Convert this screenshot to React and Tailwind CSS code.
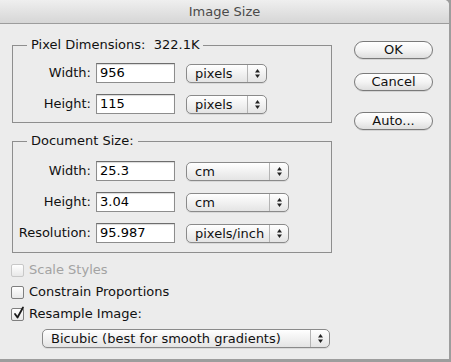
import React from "react";

const FONT = { fontFamily: '"DejaVu Sans", "Lucida Grande", sans-serif' };

const Arrows = () => (
  <svg width="7" height="11" viewBox="0 0 7 11">
    <path d="M3.5 1 L6 4.5 L1 4.5 Z" fill="#222" />
    <path d="M3.5 10 L6 6.5 L1 6.5 Z" fill="#222" />
  </svg>
);

const Popup = ({ value, w }) => (
  <div className={`${w} h-[19px] flex items-stretch rounded-[5px] border border-[#8a8a8a] bg-gradient-to-b from-white to-[#e4e4e4] shadow-[0_1px_0_rgba(0,0,0,0.08)]`}>
    <span className="flex-1 pl-[8px] leading-[17px] text-[#111] truncate">{value}</span>
    <span className="w-[19px] flex items-center justify-center border-l border-[#b4b4b4]">
      <Arrows />
    </span>
  </div>
);

const Field = ({ label, value, unit, unitW }) => (
  <div className="flex items-center h-[20px]">
    <span className="w-[78px] text-right text-[#111]">{label}</span>
    <div className="ml-[5px] w-[79px] h-[20px] bg-white border border-[#8d8d8d] border-t-[#6d6d6d] shadow-[inset_0_1px_1px_rgba(0,0,0,0.15)] pl-[3px] leading-[18px] text-black">
      {value}
    </div>
    <div className="ml-[11px]">
      <Popup value={unit} w={unitW} />
    </div>
  </div>
);

const Group = ({ legend, children, className }) => (
  <fieldset className={`w-[320px] border border-[#8e8e8e] ${className}`}>
    <legend className="ml-[14px] px-[4px] leading-[16px] whitespace-pre text-[#111]">{legend}</legend>
    {children}
  </fieldset>
);

const Check = ({ label, checked, disabled }) => (
  <div className={`flex items-center h-[14px] ${disabled ? "text-[#a3a3a3]" : "text-[#111]"}`}>
    <span
      className={`relative w-[13px] h-[13px] rounded-[2px] border bg-gradient-to-b from-white to-[#e8e8e8] ${
        disabled ? "border-[#c8c8c8]" : "border-[#7f7f7f]"
      }`}
    >
      {checked && (
        <svg className="absolute left-[1px] -top-[3px]" width="12" height="14" viewBox="0 0 12 14">
          <path d="M2 8 L4.5 11.5 L10 1.5" stroke="#1a1a1a" strokeWidth="1.8" fill="none" strokeLinecap="round" strokeLinejoin="round" />
        </svg>
      )}
    </span>
    <span className="ml-[5px]">{label}</span>
  </div>
);

const Button = ({ children, className = "" }) => (
  <div className={`w-[79px] h-[18px] rounded-full border border-[#7a7a7a] bg-gradient-to-b from-white via-[#f4f4f4] to-[#dedede] flex items-center justify-center text-[#111] shadow-[0_1px_0_rgba(0,0,0,0.1)] ${className}`}>
    {children}
  </div>
);

export default function App() {
  return (
    <div className="w-[451px] h-[362px] bg-[#9d9d9d] overflow-hidden text-[13px]" style={FONT}>
      <div className="w-[449px] h-[359px] bg-[#ececec] rounded-tr-[5px] flex flex-col">
        <div className="h-[24px] border-b border-[#9c9c9c] bg-gradient-to-b from-[#efefef] to-[#d6d6d6] rounded-tr-[5px] flex items-center justify-center text-[#4a4a4a]">
          Image Size
        </div>
        <div className="flex px-[12px]">
          <div className="w-[320px] flex flex-col">
            <Group legend="Pixel Dimensions:  322.1K" className="mt-[13px] pt-[10px] pb-[8px]">
              <div className="flex flex-col gap-[11px]">
                <Field label="Width:" value="956" unit="pixels" unitW="w-[81px]" />
                <Field label="Height:" value="115" unit="pixels" unitW="w-[81px]" />
              </div>
            </Group>
            <Group legend="Document Size:" className="mt-[10px] pt-[12px] pb-[9px]">
              <div className="flex flex-col gap-[11px]">
                <Field label="Width:" value="25.3" unit="cm" unitW="w-[103px]" />
                <Field label="Height:" value="3.04" unit="cm" unitW="w-[103px]" />
                <Field label="Resolution:" value="95.987" unit="pixels/inch" unitW="w-[103px]" />
              </div>
            </Group>
            <div className="mt-[10px] -ml-[1px] flex flex-col gap-[8px]">
              <Check label="Scale Styles" disabled />
              <Check label="Constrain Proportions" />
              <Check label="Resample Image:" checked />
            </div>
            <div className="mt-[8px] ml-[30px]">
              <Popup value="Bicubic (best for smooth gradients)" w="w-[288px]" />
            </div>
          </div>
          <div className="ml-[22px] pt-[17px] flex flex-col">
            <Button>OK</Button>
            <Button className="mt-[14px]">Cancel</Button>
            <Button className="mt-[21px]">Auto...</Button>
          </div>
        </div>
      </div>
    </div>
  );
}
